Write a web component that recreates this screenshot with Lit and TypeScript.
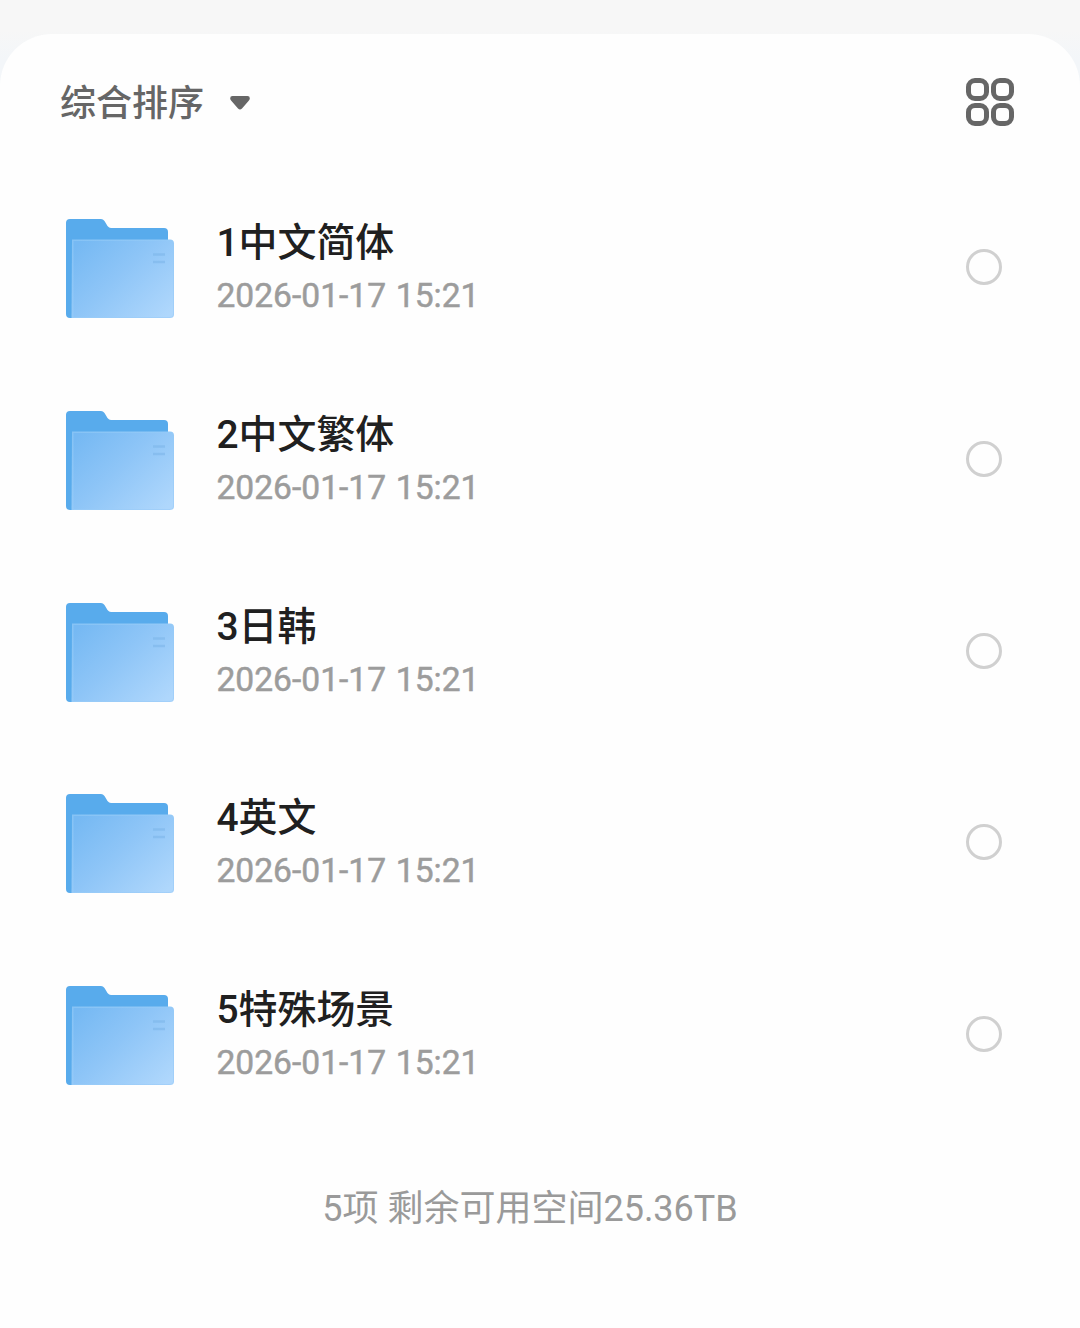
import { LitElement, html, css } from 'lit';
import { customElement, property } from 'lit/decorators.js';

@customElement('folder-icon')
class FolderIcon extends LitElement {
  static styles = css`
    :host {
      display: block;
      width: 110px;
      height: 102px;
    }

    svg {
      display: block;
    }
  `;

  render() {
    return html`
      <svg width="110" height="102" viewBox="0 0 110 102">
        <defs>
          <linearGradient id="front" x1="0" y1="0.1" x2="1" y2="0.9">
            <stop offset="0" stop-color="#76b9f3" />
            <stop offset="0.45" stop-color="#8ec5f7" />
            <stop offset="1" stop-color="#afd7fc" />
          </linearGradient>
          <linearGradient id="edge" x1="0" y1="0" x2="1" y2="1">
            <stop offset="0" stop-color="#86c3f5" />
            <stop offset="1" stop-color="#a3d0fa" />
          </linearGradient>
        </defs>
        <path
          fill="#58abec"
          d="M1 5Q1 1 5 1H36Q38 1 39.500 3L42.500 8Q44 10 46 10H99Q103 10 103 14V100H5Q1 100 1 96Z"
        />
        <path fill="url(#edge)" d="M7 21.500H105Q109 21.500 109 25.500V96.500Q109 100 105 100H6.500Z" />
        <path fill="url(#front)" d="M8.500 23H105Q108 23 108 26V96Q108 99 105 99H8.500Z" />
        <path fill="none" stroke="#7db6ea" stroke-width="2.500" opacity="0.6" d="M88 36.500H100M88 44H100" />
      </svg>
    `;
  }
}

@customElement('folder-row')
class FolderRow extends LitElement {
  @property() name = '';
  @property() date = '';

  static styles = css`
    :host {
      display: flex;
      align-items: center;
      height: 191.700px;
      padding: 0 78px 0 65px;
    }

    folder-icon {
      margin-top: 4px;
    }

    .info {
      flex: 1;
      margin: 2px 0 0 41.500px;
    }

    .name {
      color: #202020;
      font-size: 38.900px;
      font-weight: 500;
      line-height: 56px;
    }

    .date {
      color: #9c9c9c;
      font-size: 33.600px;
      line-height: 50px;
      word-spacing: 1.500px;
      -webkit-text-stroke: 0.500px #9c9c9c;
    }

    .check {
      box-sizing: border-box;
      width: 36px;
      height: 36px;
      border: 3.500px solid #d0d0d0;
      border-radius: 50%;
    }
  `;

  render() {
    return html`
      <folder-icon></folder-icon>
      <div class="info">
        <div class="name">${this.name}</div>
        <div class="date">${this.date}</div>
      </div>
      <div class="check"></div>
    `;
  }
}

@customElement('app-root')
class AppRoot extends LitElement {
  static styles = css`
    :host {
      display: block;
      box-sizing: border-box;
      height: 1328px;
      padding-top: 34px;
      overflow: hidden;
      background: linear-gradient(#f7f7f7 30px, #f3f6f9 60px);
      font-family: Roboto, 'Noto Sans CJK SC', sans-serif;
    }

    .sheet {
      height: 1294px;
      border-radius: 52px 52px 0 0;
      background: #fefefe;
    }

    .toolbar {
      display: flex;
      align-items: center;
      height: 136px;
      padding: 0 65px 0 60px;
    }

    .sort {
      padding-bottom: 4px;
      color: #666;
      font-size: 36px;
      font-weight: 500;
    }

    .arrow {
      margin: 2px 0 0 26px;
    }

    .grid {
      margin-left: auto;
    }

    .list {
      padding-top: 1.300px;
    }

    .footer {
      margin-top: 53px;
      padding-right: 20px;
      color: #9a9a9a;
      font-size: 36px;
      line-height: 52px;
      text-align: center;
    }
  `;

  folders = ['1中文简体', '2中文繁体', '3日韩', '4英文', '5特殊场景'];

  render() {
    return html`
      <div class="sheet">
        <div class="toolbar">
          <span class="sort">综合排序</span>
          <svg class="arrow" width="20" height="14" viewBox="0 0 20 14">
            <path fill="#666" d="M2.500 0H17.500Q20 0 19.800 2.500Q19.800 3.500 18.500 5L12 12.500Q10 14.500 8 12.500L1.500 5Q0.200 3.500 0.200 2.500Q0 0 2.500 0Z" />
          </svg>
          <svg class="grid" width="50" height="50" viewBox="0 0 50 50" fill="none" stroke="#666" stroke-width="5">
            <rect x="3.500" y="3.500" width="18" height="18" rx="6.500" />
            <rect x="28.500" y="3.500" width="18" height="18" rx="6.500" />
            <rect x="3.500" y="28.500" width="18" height="18" rx="6.500" />
            <rect x="28.500" y="28.500" width="18" height="18" rx="6.500" />
          </svg>
        </div>
        <div class="list">
          ${this.folders.map((name) => html`<folder-row name=${name} date="2026-01-17 15:21"></folder-row>`)}
        </div>
        <div class="footer">5项 剩余可用空间25.36TB</div>
      </div>
    `;
  }
}
